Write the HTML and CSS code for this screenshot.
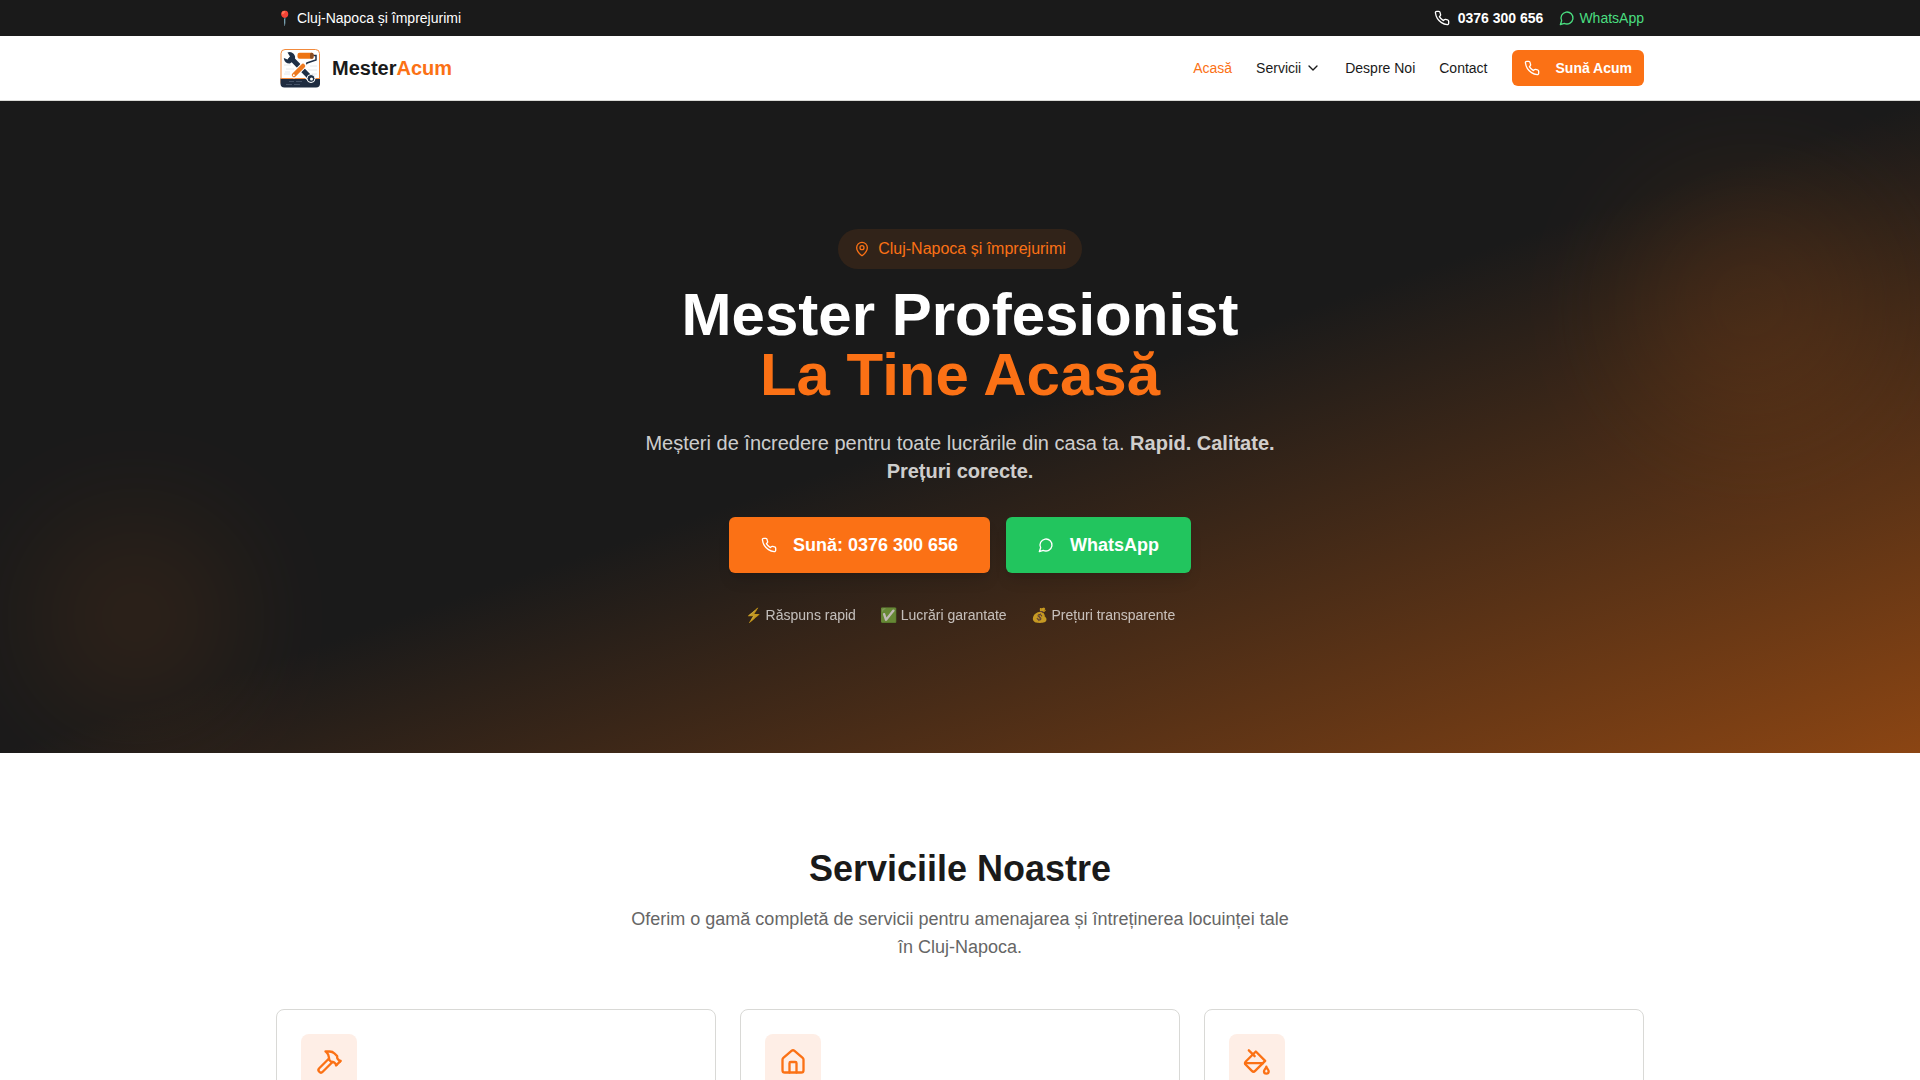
FILE: index.html
```html
<!DOCTYPE html>
<html lang="ro">
<head>
<meta charset="utf-8">
<meta name="viewport" content="width=device-width, initial-scale=1">
<title>MesterAcum</title>
<link rel="stylesheet" href="styles.css">
</head>
<body>
<svg class="sprite" aria-hidden="true">
  <symbol id="phone" viewBox="0 0 24 24"><path d="M22 16.92v3a2 2 0 0 1-2.18 2 19.79 19.79 0 0 1-8.63-3.07 19.5 19.5 0 0 1-6-6 19.79 19.79 0 0 1-3.07-8.67A2 2 0 0 1 4.11 2h3a2 2 0 0 1 2 1.72 12.84 12.84 0 0 0 .7 2.81 2 2 0 0 1-.45 2.11L8.09 9.91a16 16 0 0 0 6 6l1.27-1.27a2 2 0 0 1 2.11-.45 12.84 12.84 0 0 0 2.81.7A2 2 0 0 1 22 16.92z"/></symbol>
  <symbol id="chat" viewBox="0 0 24 24"><path d="M7.9 20A9 9 0 1 0 4 16.1L2 22Z"/></symbol>
</svg>

<div class="topbar">
  <div class="container topbar-row">
    <span>📍 Cluj-Napoca și împrejurimi</span>
    <div class="topbar-links">
      <a class="topbar-phone" href="tel:0376300656"><svg class="icon"><use href="#phone"/></svg>0376 300 656</a>
      <a class="topbar-chat" href="#whatsapp"><svg class="icon"><use href="#chat"/></svg>WhatsApp</a>
    </div>
  </div>
</div>

<header class="header">
  <div class="container header-row">
    <a class="brand" href="#">
      <svg class="logo" viewBox="0 0 48 48" aria-hidden="true">
        <rect x="5" y="5.500" width="38.500" height="37" rx="4" fill="#fff" stroke="#f28a3c"/>
        <path d="M8 17h5M8 21h7M10 25h8M34 22h7M32 26h9M34 30h7M8 30h6M9 28h5" stroke="#e6e8ea"/>
        <path d="M4.500 34.500h39.500v5a4 4 0 0 1-4 4h-31.500a4 4 0 0 1-4-4z" fill="#1f2c40"/>
        <path d="M5 34.500h39" stroke="#f28a3c"/>
        <path d="M13 37.500h5M20 37.500h6M10 40.500h6M18 40.500h6" stroke="#465368"/>
        <path d="M16 15 35 34.500" stroke="#fff" stroke-width="8" stroke-linecap="round"/>
        <path d="M14 13 34 33.500" stroke="#1f2f45" stroke-width="5"/>
        <circle cx="35" cy="34.500" r="4" fill="#1f2f45" stroke="#fff"/>
        <circle cx="35.500" cy="35" r="1.500" fill="#fff"/>
        <path d="M11.500 8.500a5.500 5.500 0 0 1 7 7.500l-4.500 3.500a5.500 5.500 0 0 1-6.200-5.500l3.700 1.500 2.500-3z" fill="#1f2f45"/>
        <path d="M37 11.500h3v4.500l-9 3-2 3" fill="none" stroke="#1f2f45" stroke-width="1.500"/>
        <path d="M27.500 21.500 18 31" stroke="#fff" stroke-width="6.500" stroke-linecap="round"/>
        <path d="M27 22 18 31" stroke="#ee7a20" stroke-width="4.500" stroke-linecap="round"/>
        <circle cx="17.800" cy="31.200" r="1" fill="#fff"/>
        <rect x="21.500" y="8.700" width="16" height="6" rx="2" fill="#ee7413"/>
        <rect x="34" y="8.700" width="3.500" height="6" rx="1.500" fill="#8a4d22"/>
      </svg>
      <span>Mester<span class="accent">Acum</span></span>
    </a>
    <nav class="nav">
      <a class="accent" href="#">Acasă</a>
      <button class="nav-menu" type="button">Servicii<svg class="icon" viewBox="0 0 24 24"><path d="m6 9 6 6 6-6"/></svg></button>
      <a href="#despre">Despre Noi</a>
      <a href="#contact">Contact</a>
      <a class="btn btn-small" href="tel:0376300656"><svg class="icon"><use href="#phone"/></svg>Sună Acum</a>
    </nav>
  </div>
</header>

<main>
  <section class="hero">
    <div class="glow glow-right"></div>
    <div class="glow glow-left"></div>
    <div class="container hero-content">
      <span class="pill"><svg class="icon" viewBox="0 0 24 24"><path d="M20 10c0 4.993-5.539 10.193-7.399 11.799a1 1 0 0 1-1.202 0C9.539 20.193 4 14.993 4 10a8 8 0 0 1 16 0"/><circle cx="12" cy="10" r="3"/></svg>Cluj-Napoca și împrejurimi</span>
      <h1 class="hero-title">Mester Profesionist <span class="accent hero-title-line">La Tine Acasă</span></h1>
      <p class="hero-text">Meșteri de încredere pentru toate lucrările din casa ta. <strong>Rapid. Calitate. Prețuri corecte.</strong></p>
      <div class="hero-actions">
        <a class="btn btn-large" href="tel:0376300656"><svg class="icon"><use href="#phone"/></svg>Sună: 0376 300 656</a>
        <a class="btn btn-large btn-green" href="#whatsapp"><svg class="icon"><use href="#chat"/></svg>WhatsApp</a>
      </div>
      <div class="trust">
        <span>⚡ Răspuns rapid</span>
        <span>✅ Lucrări garantate</span>
        <span>💰 Prețuri transparente</span>
      </div>
    </div>
  </section>

  <section class="services">
    <div class="container">
      <div class="section-head">
        <h2 class="section-title">Serviciile Noastre</h2>
        <p class="section-text">Oferim o gamă completă de servicii pentru amenajarea și întreținerea locuinței tale în Cluj-Napoca.</p>
      </div>
      <div class="cards">
        <article class="card"><div class="card-icon"><svg viewBox="0 0 24 24"><path d="m15 12-8.373 8.373a1 1 0 1 1-3-3L12 9"/><path d="m18 15 4-4"/><path d="m21.500 11.500-1.914-1.914A2 2 0 0 1 19 8.172V7l-2.260-2.260a6 6 0 0 0-4.202-1.756L9 2.960l.92.820A6.180 6.180 0 0 1 12 8.400V10l2 2h1.172a2 2 0 0 1 1.414.586L18.500 14.500"/></svg></div></article>
        <article class="card"><div class="card-icon"><svg viewBox="0 0 24 24"><path d="M15 21v-8a1 1 0 0 0-1-1h-4a1 1 0 0 0-1 1v8"/><path d="M3 10a2 2 0 0 1 .709-1.528l7-5.999a2 2 0 0 1 2.582 0l7 5.999A2 2 0 0 1 21 10v9a2 2 0 0 1-2 2H5a2 2 0 0 1-2-2z"/></svg></div></article>
        <article class="card"><div class="card-icon"><svg viewBox="0 0 24 24"><path d="m19 11-8-8-8.600 8.600a2 2 0 0 0 0 2.800l5.200 5.200c.8.800 2 .8 2.800 0L19 11Z"/><path d="m5 2 5 5"/><path d="M2 13h15"/><path d="M22 20a2 2 0 1 1-4 0c0-1.600 1.700-2.400 2-4 .3 1.600 2 2.400 2 4Z"/></svg></div></article>
      </div>
    </div>
  </section>
</main>
</body>
</html>
```
FILE: styles.css
```css
:root {
  --dark: #1a1a1a;
  --orange: #fb7115;
  --green: #22c55e;
}

*, *::before, *::after { box-sizing: border-box; }

body {
  margin: 0;
  font-family: "Liberation Sans", Arial, sans-serif;
  font-size: 16px;
  line-height: 24px;
  color: var(--dark);
  background: #fff;
}

h1, h2, p { margin: 0; }
a { color: inherit; text-decoration: none; }
.sprite { display: none; }
.accent { color: var(--orange); }

.icon {
  width: 16px;
  height: 16px;
  flex: none;
}

.icon, .card-icon svg {
  fill: none;
  stroke: currentColor;
  stroke-width: 2;
  stroke-linecap: round;
  stroke-linejoin: round;
}

.container {
  width: 100%;
  max-width: 1400px;
  margin: 0 auto;
  padding: 0 16px;
}

.topbar {
  padding: 8px 0;
  font-size: 14px;
  line-height: 20px;
  color: #fff;
  background: var(--dark);
}

.topbar-row, .header-row {
  display: flex;
  align-items: center;
  justify-content: space-between;
}

.topbar-links { display: flex; gap: 16px; }
.topbar-links a { display: flex; align-items: center; }
.topbar-phone { gap: 8px; font-weight: 700; }
.topbar-links .topbar-chat { gap: 4px; color: #4ade80; }

.header {
  background: #fff;
  border-bottom: 1px solid #d9d9d6;
}

.header-row { min-height: 64px; }

.brand {
  display: flex;
  align-items: center;
  gap: 8px;
  font-size: 20px;
  line-height: 28px;
  font-weight: 700;
}

.logo { width: 48px; height: 48px; }

.nav {
  display: flex;
  align-items: center;
  gap: 24px;
  font-size: 14px;
  line-height: 20px;
}

.nav-menu {
  display: flex;
  align-items: center;
  gap: 4px;
  padding: 0;
  border: 0;
  background: none;
  color: inherit;
  font: inherit;
}

.btn {
  display: flex;
  align-items: center;
  gap: 16px;
  border-radius: 6px;
  font-weight: 700;
  color: #fff;
  background: var(--orange);
}

.btn-small { padding: 8px 12px; }

.btn-large {
  padding: 14px 32px;
  font-size: 18px;
  line-height: 28px;
  box-shadow: 0 10px 15px -3px rgba(0, 0, 0, .1), 0 4px 6px -4px rgba(0, 0, 0, .1);
}

.btn-green { background: var(--green); }

.hero {
  position: relative;
  overflow: hidden;
  padding: 128px 0;
  color: #fff;
  background: linear-gradient(to bottom right, #1a1a1a 0%, #1a1a1a 50%, #8b4513 100%);
}

.glow {
  position: absolute;
  border-radius: 50%;
  filter: blur(64px);
  background: var(--orange);
  opacity: .1;
}

.glow-right {
  top: 80px;
  right: 40px;
  width: 256px;
  height: 256px;
}

.glow-left {
  bottom: 40px;
  left: 40px;
  width: 192px;
  height: 192px;
}

.hero-content {
  position: relative;
  display: flex;
  flex-direction: column;
  align-items: center;
  text-align: center;
}

.pill {
  display: flex;
  align-items: center;
  gap: 8px;
  margin-bottom: 16px;
  padding: 8px 16px;
  border-radius: 20px;
  color: var(--orange);
  background: rgba(251, 113, 21, .1);
}

.hero-title {
  margin-bottom: 24px;
  font-size: 60px;
  line-height: 60px;
  font-weight: 700;
}

.hero-title-line { display: block; }

.hero-text {
  max-width: 672px;
  margin-bottom: 32px;
  font-size: 20px;
  line-height: 28px;
  color: rgba(255, 255, 255, .8);
}

.hero-actions {
  display: flex;
  flex-wrap: wrap;
  justify-content: center;
  gap: 16px;
  margin-bottom: 32px;
}

.trust {
  display: flex;
  flex-wrap: wrap;
  justify-content: center;
  gap: 24px;
  font-size: 14px;
  line-height: 20px;
  opacity: .7;
}

.services { padding: 96px 0; }

.section-head {
  max-width: 672px;
  margin: 0 auto 48px;
  text-align: center;
}

.section-title {
  margin-bottom: 16px;
  font-size: 36px;
  line-height: 40px;
  font-weight: 700;
}

.section-text {
  font-size: 18px;
  line-height: 28px;
  color: #666;
}

.cards {
  display: grid;
  grid-template-columns: repeat(3, 1fr);
  gap: 24px;
}

.card {
  min-height: 240px;
  padding: 24px;
  border: 1px solid #d9d9d6;
  border-radius: 8px;
}

.card-icon {
  display: grid;
  place-items: center;
  width: 56px;
  height: 56px;
  border-radius: 8px;
  color: var(--orange);
  background: #feeee6;
}

.card-icon svg { width: 28px; height: 28px; }
```
